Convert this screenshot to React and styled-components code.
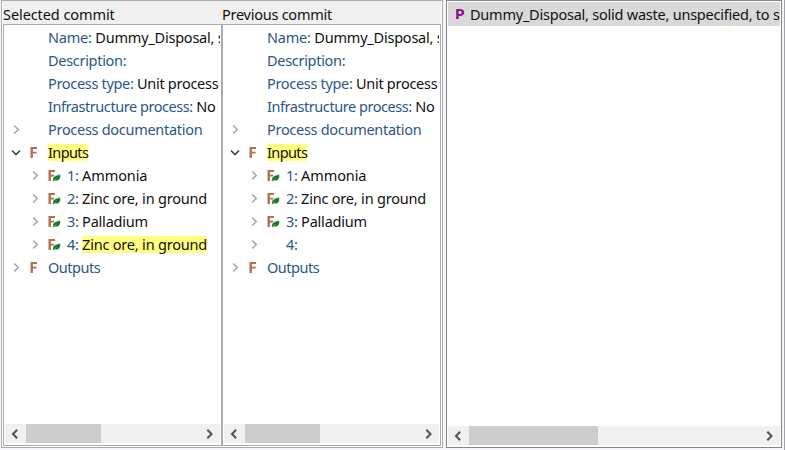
import React from "react";
import styled, { createGlobalStyle } from "styled-components";

const GlobalStyle = createGlobalStyle`
  * { box-sizing: border-box; }
  body { margin: 0; background: #f0f0f0; overflow: hidden; }
`;

const Window = styled.div`
  display: flex;
  width: 785px;
  height: 450px;
  overflow: hidden;
  background: #f6f6f8;
  color: #111;
  font: 14.5px/23px "Noto Sans", sans-serif;
  white-space: pre;
`;

const CompareFrame = styled.section`
  display: flex;
  width: 442px;
  height: 448px;
  margin-left: 1px;
  padding: 0 1px 1px;
  border: 1px solid #a9abb1;
  background: #fff;
`;

const Column = styled.div`
  display: flex;
  flex-direction: column;
  width: 219px;
  height: 445px;
`;

const Header = styled.div`
  flex: none;
  height: 23px;
  background: #f0f0f0;
  line-height: 27px;
  letter-spacing: ${(p) => p.$track}px;
`;

const TreePane = styled.div`
  display: flex;
  flex-direction: column;
  flex: 1;
  min-height: 0;
  padding: 1px 1px 2px;
  border: 1px solid #a9abb1;
`;

const Rows = styled.div`
  flex: 1;
  min-height: 0;
  overflow: hidden;
`;

const Row = styled.div`
  display: flex;
  align-items: center;
  height: 23px;
  padding-left: ${(p) => p.$level * 19}px;
`;

const Slot = styled.span`
  display: flex;
  flex: none;
  align-items: center;
  width: ${(p) => p.$width}px;
  height: 23px;
`;

const Label = styled.span`
  flex: none;
  color: ${(p) => (p.$dark ? "#111" : "#2c5686")};
  letter-spacing: ${(p) => p.$track || 0}px;
  height: 17px;
  line-height: 17px;
  background: ${(p) => (p.$marked ? "#ffff80" : "transparent")};
`;

const ScrollBar = styled.div`
  display: flex;
  flex: none;
  align-items: center;
  height: 19px;
  background: #f0f0f0;
`;

const ScrollButton = styled.span`
  display: flex;
  flex: none;
  align-items: center;
  padding-left: 4px;
  width: 21px;
  height: 19px;
`;

const Track = styled.span`
  flex: 1;
  height: 19px;
`;

const Thumb = styled.span`
  display: block;
  width: ${(p) => p.$width}px;
  height: 19px;
  background: #cdcdcd;
`;

const ListPane = styled.section`
  display: flex;
  flex-direction: column;
  width: 336px;
  height: 448px;
  margin-left: 3px;
  padding: 1px 1px 2px;
  border: 1px solid #85868c;
  background: #fff;
`;

const Selected = styled.div`
  display: flex;
  align-items: center;
  height: 24px;
  padding-left: 6px;
  overflow: hidden;
  background: #d9d9d9;
`;

const EmptyArea = styled.div`
  flex: 1;
`;

const WindowEdge = styled.div`
  width: 1px;
  height: 450px;
  margin-left: 2px;
  background: #a0a0a5;
`;

const Arrow = ({ left }) => (
  <svg width="12" height="10" viewBox="0 0 12 10">
    <path d={left ? "M8.2 .8 4 5l4.2 4.2" : "M4.3.8 8.5 5 4.3 9.2"} fill="none" stroke="#555" strokeWidth="2.1" />
  </svg>
);

const Chevron = ({ open }) => (
  <svg width="12" height="11" viewBox="0 0 12 11">
    <path
      d={open ? "M2 3.5 6 7.5l4-4" : "M4.2 1.5 8.2 5.5l-4 4"}
      fill="none"
      stroke={open ? "#404040" : "#a6a6a6"}
      strokeWidth="1.6"
    />
  </svg>
);

const FlowIcon = ({ leaf }) => (
  <svg width="15" height="15" viewBox="0 0 15 15">
    <path
      d={leaf ? "M1.5 2H8V4H3.9V6.7H7.2V8.6H3.9V13H1.5Z" : "M2.5 2H9V4H4.9V6.7H8.6V8.6H4.9V13H2.5Z"}
      fill="#b36f50"
    />
    {leaf && (
      <>
        <path
          d="M5.9 12.4C5.3 8.9 8.5 7.4 13.2 6.6c.9 3.8-1.4 7.2-5.4 5.9L6.4 13.5Z"
          fill="#0f7a1d"
          stroke="#fff"
          strokeWidth=".4"
        />
        <path d="m6.6 12.6 3.2-2.6" stroke="#83bd89" strokeWidth=".6" />
      </>
    )}
  </svg>
);

const ProcessIcon = () => (
  <svg width="15" height="15" viewBox="0 0 15 15">
    <path
      fillRule="evenodd"
      d="M2.2 2H6c2.8 0 4.2 1.3 4.2 3.5S8.6 9.1 6 9.1H4.7V12H2.2ZM4.7 4v3.1h1.1c1.2 0 1.8-.5 1.8-1.6S7 4 5.8 4Z"
      fill="#85158a"
    />
  </svg>
);

const HorizontalScroll = ({ width }) => (
  <ScrollBar>
    <ScrollButton><Arrow left /></ScrollButton>
    <Track><Thumb $width={width} /></Track>
    <ScrollButton><Arrow /></ScrollButton>
  </ScrollBar>
);

const flows = [
  ["1: ", "Ammonia", -0.1],
  ["2: ", "Zinc ore, in ground", -0.2],
  ["3: ", "Palladium", -0.2],
  ["4: ", "Zinc ore, in ground", -0.2],
];

const fields = [
  ["Name: ", "Dummy_Disposal, s", -0.2, -0.22],
  ["Description:", "", -0.3, 0],
  ["Process type: ", "Unit process", -0.32, -0.28],
  ["Infrastructure process: ", "No", -0.44, -0.1],
];

const Branch = ({ text, open, icon, marked, track }) => (
  <Row $level={0}>
    <Slot $width={5} />
    <Slot $width={18}><Chevron open={open} /></Slot>
    <Slot $width={20}>{icon && <FlowIcon />}</Slot>
    <Label $dark={marked} $marked={marked} $track={track}>{text}</Label>
  </Row>
);

const Tree = ({ previous }) => (
  <TreePane>
    <Rows>
      {fields.map(([name, value, nameTrack, valueTrack]) => (
        <Row key={name} $level={0}>
          <Slot $width={43} />
          <Label $track={nameTrack}>{name}</Label>
          {value && <Label $dark $track={valueTrack}>{value}</Label>}
        </Row>
      ))}
      <Branch text="Process documentation" track={-0.29} />
      <Branch text="Inputs" open icon marked track={-0.6} />
      {flows.map(([no, name, track], i) => {
        const removed = i === 3 && previous;
        return (
          <Row key={no} $level={1}>
            <Slot $width={5} />
            <Slot $width={18}><Chevron /></Slot>
            <Slot $width={20}>{!removed && <FlowIcon leaf />}</Slot>
            <Label $track={-0.3}>{no}</Label>
            {!removed && <Label $dark $marked={i === 3} $track={track}>{name}</Label>}
          </Row>
        );
      })}
      <Branch text="Outputs" icon track={-0.5} />
    </Rows>
    <HorizontalScroll width={75} />
  </TreePane>
);

export default function App() {
  return (
    <Window>
      <GlobalStyle />
      <CompareFrame>
        <Column>
          <Header $track={-0.08}>Selected commit</Header>
          <Tree />
        </Column>
        <Column>
          <Header $track={-0.25}>Previous commit</Header>
          <Tree previous />
        </Column>
      </CompareFrame>
      <ListPane>
        <Selected>
          <Slot $width={16}><ProcessIcon /></Slot>
          <Label $dark $track={-0.23}>Dummy_Disposal, solid waste, unspecified, to s</Label>
        </Selected>
        <EmptyArea />
        <HorizontalScroll width={129} />
      </ListPane>
      <WindowEdge />
    </Window>
  );
}
